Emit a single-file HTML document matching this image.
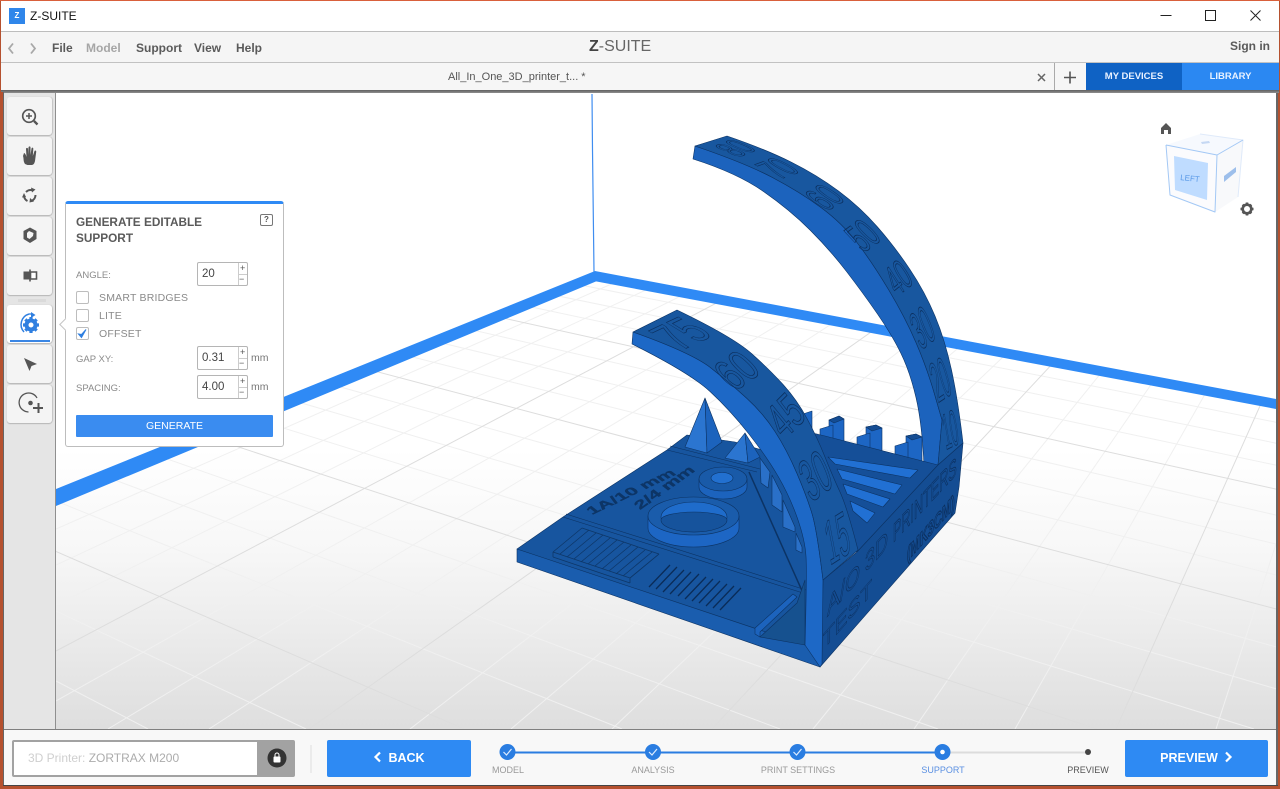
<!DOCTYPE html>
<html><head><meta charset="utf-8"><title>Z-SUITE</title>
<style>
html,body{margin:0;padding:0;width:1280px;height:789px;overflow:hidden;background:#b5512f;font-family:"Liberation Sans",sans-serif}
#r{position:absolute;left:0;top:0;width:1280px;height:789px;overflow:hidden}
.a{position:absolute;white-space:nowrap}
.m{font-size:12px;font-weight:bold;color:#5a5a5a;top:41px;line-height:14px}
.btn{position:absolute;left:7px;width:45px;height:38px;background:#f4f4f4;border:0;border-radius:3px;box-shadow:0 1px 1px #b5b5b5,1px 0 1px #c5c5c5}
.lab{font-size:9.5px;color:#8a8a8a;left:76px;line-height:12px}
.cb{position:absolute;left:76px;width:11px;height:11px;border:1px solid #bdbdbd;border-radius:2px;background:#fff}
.cl{font-size:10.5px;color:#8a8a8a;left:99px;line-height:12px;letter-spacing:.2px}
.inp{position:absolute;left:197px;width:49px;height:22px;border:1px solid #b5b5b5;border-radius:2px;background:#fff;font-size:11.5px;color:#444;line-height:23px;text-indent:4px}
.inp i{position:absolute;left:40px;top:0;width:9px;height:22px;border-left:1px solid #ccc;font:normal 9px/11px "Liberation Sans",sans-serif;text-indent:1px;color:#555}
.inp b{position:absolute;left:40px;top:11px;width:9px;height:1px;background:#ccc}
.mm{font-size:10.5px;color:#777;left:251px;line-height:12px}
.step{font-size:9px;color:#9a9a9a;top:764px;line-height:12px;transform:translateX(-50%);font-weight:normal}
.big{position:absolute;top:740px;height:37px;background:#2e8af3;border-radius:2px;color:#fff;font-size:12.5px;font-weight:bold;line-height:36px;text-align:center}
.n text{vector-effect:non-scaling-stroke}
</style></head><body><div id="r">

<div class="a" style="left:0;top:0;width:1280px;height:1px;background:#d9603b"></div>
<div class="a" style="left:1px;top:1px;width:1278px;height:30px;background:#fff"></div>
<div class="a" style="left:1px;top:31px;width:1278px;height:1px;background:#bdbdbd"></div>
<div class="a" style="left:1px;top:32px;width:1278px;height:30px;background:#f5f5f5"></div>
<div class="a" style="left:1px;top:62px;width:1278px;height:1px;background:#c2c2c2"></div>
<div class="a" style="left:1px;top:63px;width:1278px;height:27px;background:#f6f6f6"></div>
<div class="a" style="left:1px;top:90px;width:1278px;height:3px;background:linear-gradient(#5f5f5f,#8f8f8f)"></div>

<svg class="a" style="left:0;top:0" width="1280" height="789" viewBox="0 0 1280 789">
<defs>
<linearGradient id="fl" x1="0" y1="0" x2="0" y2="1"><stop offset="0" stop-color="#fff"/><stop offset=".56" stop-color="#fff"/><stop offset=".72" stop-color="#f7f7f7"/><stop offset="1" stop-color="#dedede"/></linearGradient>
<clipPath id="fc"><polygon points="594,272 56,498 56,729 1276,729 1276,405"/></clipPath>
</defs>
<rect x="56" y="93" width="1220" height="636" fill="url(#fl)"/>
<g clip-path="url(#fc)" stroke="#f0f0f0" stroke-width="1" fill="none">
<path d="M56 181.500L1280 423M56 193L1280 444M56 206L1280 466M56 234L1280 516M56 250L1280 545M56 267L1280 576M56 308L1280 648M56 331L1280 690M56 357.500L1254 729M56 420L938 729M56 458L780 729M56 501L622 729M56 611L306 729M56 681L148 729"/>
<path d="M802 200L56 529M839 200L56 565M875 200L56 605M949 200L56 701M985 200L108 729M1022 200L209 729M1095 200L410 729M1132 200L511 729M1168 200L612 729M1241 200L813 729M1276 203L914 729M1276 269L1015 729M1276 544L1216 729"/>
<g stroke="#dddddd">
<path d="M56 219L1280 490M56 287L1280 610M56 387L1097 729M56 551.500L464 729"/>
<path d="M912 200L56 651M1058 200L309 729M1205 200L712 729M1276 370L1116 729"/>
</g>
</g>
<polygon points="595,271 56,489 56,506 597,281" fill="#2f8af5"/>
<polygon points="595,271 1276,399 1276,409 594,281" fill="#2f8af5"/>
<path d="M592 94L592.500 150L594 272" stroke="#3f8df0" stroke-width="1.200" fill="none"/>

<!-- MODEL -->
<g stroke="#0c3364" stroke-width=".6" stroke-linejoin="round">
<!-- big arc side -->
<path fill="#1c63bd" d="M693 159Q737 173 763.500 191.500Q790 210 810 230Q830 250 846.500 271.500Q863 293 877.500 314Q892 335 901 353.500Q910 372 916 397.500Q922 423 924 465L938 465L942 420L934.500 394Q927 368 916 342.500Q905 317 888.500 289.500Q872 262 857 242.500Q842 223 821 207.500Q800 192 772.500 177.500Q745 163 695 146Z"/>
<!-- big arc top -->
<path fill="#18579f" d="M727 136Q765 149 791 162Q817 175 838.500 191Q860 207 877.500 227Q895 247 910 269.500Q925 292 935 316Q945 340 951.500 370Q958 400 963 443L938 465L942 420L934.500 394Q927 368 916 342.500Q905 317 888.500 289.500Q872 262 857 242.500Q842 223 821 207.500Q800 192 772.500 177.500Q745 163 695 146Z"/>
<!-- teeth -->
<g fill="#1d66c4">
<polygon points="803,414 812,411 812,432 803,432"/>
<polygon points="829,420 839,416 844,419 844,443 829,440"/><polygon fill="#144c92" points="829,420 839,416 844,419 834,423"/>
<polygon points="820,429 833,425 833,440 820,438"/>
<polygon points="866,427 876,425 882,428 882,452 866,449"/><polygon fill="#144c92" points="866,427 876,425 882,428 872,431"/>
<polygon points="857,437 870,433 870,450 857,447"/>
<polygon points="906,436 916,434 922,437 922,462 906,458"/><polygon fill="#144c92" points="906,436 916,434 922,437 912,440"/>
<polygon points="895,446 908,442 908,460 895,456"/>
</g>
<polygon fill="#154f98" points="800,430 825,436 938,465 857,552 820,540"/>
<g fill="#2170d3" stroke="#0c3364">
<polygon points="828,457 918,470 910,478 835,464"/>
<polygon points="837,469 902,485 895,494 842,479"/>
<polygon points="843,484 890,499 883,507 847,494"/>
<polygon points="850,501 875,513 867,523 853,511"/>
</g>
<!-- base -->
<polygon fill="#1a5dae" points="517,549 517,562 820,667 822,640 805,640"/>
<polygon fill="#17559f" points="517,549 563,517 667,450 687,435 735,442 830,470 822,600 805,645"/>
<path d="M563 517L803 593M566 514L806 590M667 450L757 472M670 446L760 469" stroke="#0c3364" fill="none"/>
<path d="M749 472L803 593" stroke="#0c3364" stroke-width="1.500" fill="none"/>
<polygon fill="#1c63bd" points="755,628 793,594 797,597 760,632 760,637 755,634"/>
<polygon fill="#16518f" points="760,637 797,603 805,580 805,645"/>
<!-- fins -->
<g fill="#2a70c8">
<polygon points="760,458 770,472 768,488 761,483"/>
<polygon points="772,475 782,495 782,512 772,505"/>
<polygon points="783,500 795,527 795,532 783,527"/>
<polygon points="796,533 802,547 802,553 796,550"/>
</g>
<!-- comb 1 -->
<g stroke="#0e3768" stroke-width=".8" fill="none">
<path d="M553 552L582 528M560 554L589 530M567 557L596 533M574 559L603 535M581 562L610 538M588 564L617 540M595 566L624 542M602 569L631 545M609 571L638 547M616 574L645 550M623 576L652 552M630 578L659 554"/>
<path d="M582 528L659 554M553 552L630 578M553 557L630 583M553 552V557M630 578V583M659 554L630 578"/>
</g>
<!-- comb 2 -->
<g stroke="#0a2c58" stroke-width="1.300" fill="none">
<path d="M649 587L670 565M656 589L677 567M663 592L684 570M670 594L691 572M678 596L699 574M685 599L706 577M692 601L713 579M699 603L720 581M706 606L727 584M713 608L734 586M720 610L741 588"/>
</g>
<!-- cones -->
<polygon fill="#2b75d0" points="705,398 685,447 707,453"/>
<polygon fill="#1c63bd" points="705,398 707,453 722,442"/>
<polygon fill="#2b75d0" points="745,433 725,458 748,463"/>
<polygon fill="#1c63bd" points="745,433 748,463 760,457"/>
<!-- small ring -->
<path d="M699 479V487A24 12 0 0 0 747 487V479Z" fill="#1c63bd"/>
<ellipse cx="723" cy="479" rx="24" ry="12" fill="#195aa8"/>
<ellipse cx="722" cy="478" rx="11" ry="5.500" fill="#2270d0"/>
<!-- big ring -->
<path d="M648 516V528A45.500 19 0 0 0 739 528V516Z" fill="#1d66c4"/>
<ellipse cx="693.500" cy="516" rx="45.500" ry="19" fill="#1a5cab"/>
<ellipse cx="694" cy="517" rx="33" ry="15" fill="#1f6ccb"/>
<path d="M661 520A33 8 0 0 1 727 520A33 12 0 0 1 661 520Z" fill="#16539c"/>
<!-- wall face -->
<polygon fill="#144d93" points="820,667 955,513 959,487 963,443 938,465 857,552 823,580"/>
<!-- small arc side -->
<path fill="#1d68c6" d="M632 344Q690 373 710 391.500Q730 410 748.500 433.500Q767 457 778.500 477Q790 497 797.500 518.500Q805 540 806 556.500Q807 573 805 645L820 667L822 664L823 580Q817 530 812 513.500Q807 497 797 473.500Q787 450 775 431.500Q763 413 746.500 398Q730 383 711 368Q692 353 633 332Z"/>
<!-- small arc top -->
<path fill="#18579f" d="M677 310Q733 337 751.500 353.500Q770 370 783.500 385Q797 400 807 418.500Q817 437 825 457Q833 477 840 492Q847 507 858 550L823 580Q817 530 812 513.500Q807 497 797 473.500Q787 450 775 431.500Q763 413 746.500 398Q730 383 711 368Q692 353 633 332Z"/>
</g>

<!-- text on model -->
<g class="n" fill="none" stroke="#0b2f5e" stroke-width=".7" font-family="'Liberation Sans',sans-serif" font-size="20">
<text transform="matrix(.9,-.36,1.82,.77,738,157.500)">80</text>
<text transform="matrix(.99,-.36,1.89,1.05,779.500,179.500)">70</text>
<text transform="matrix(.9,-.54,1.75,1.19,826.500,211.500)">60</text>
<text transform="matrix(.86,-.63,1.54,1.54,863.500,253)">50</text>
<text transform="matrix(.77,-.63,1.12,1.75,897.500,296.500)">40</text>
<text transform="matrix(.72,-.59,.98,2.38,921,350.500)">30</text>
<text transform="matrix(.68,-.45,.77,2.66,938,403)">20</text>
<text transform="matrix(.63,-.32,.42,2.45,946,450)">10</text>
<text transform="matrix(1.53,-.72,2.45,1.4,680.500,351)">75</text>
<text transform="matrix(1.26,-.9,1.75,1.68,734.500,392)">60</text>
<text transform="matrix(1.04,-1.04,1.54,1.89,784.500,440)">45</text>
<text transform="matrix(1.08,-.81,1.12,2.66,811,503)">30</text>
<text transform="matrix(.99,-.63,.56,3,830,565.500)">15</text>
<text transform="matrix(.96,-1.1,0,1.12,823,650)">TEST</text>
<text transform="matrix(.96,-1.1,0,1.3,827,617)">A/O</text>
<text transform="matrix(.9,-1.02,0,1.3,865,573)">3D</text>
<text transform="matrix(.63,-.68,0,1.3,893,543)">PRINTERS</text>
<text transform="matrix(.55,-.63,0,1,907,562)" font-weight="bold" stroke-width="1">(MK3CM)</text>
</g>
<g fill="#0d3566" stroke="#0d3566" stroke-width=".3" font-family="'Liberation Sans',sans-serif" font-size="12" font-weight="bold">
<text transform="matrix(1.5,-.72,.9,.7,592,515)">1A/10 mm</text>
<text transform="matrix(1.35,-.95,.9,.7,640,510)">2/4 mm</text>
</g>

<!-- cube -->
<g stroke-linejoin="round">
<polygon points="1166,145 1200,134 1243,140 1217,155" fill="#f6f9fe"/>
<polygon points="1217,155 1243,140 1238,197 1215,212" fill="#f8f9fb"/>
<polygon points="1166,145 1217,155 1215,212 1170,195" fill="#fbfbfd"/>
<polygon points="1174,156 1208,163 1207,200 1175,190" fill="#bfdcff"/>
<path d="M1200 134L1243 140L1238 197" stroke="#dfeafa" fill="none"/>
<path d="M1166 145L1217 155L1243 140M1217 155L1215 212L1170 195L1166 145" stroke="#a3c8f5" stroke-width="1" fill="none"/>
<polygon points="1224,176 1236,167 1236,172 1224,182" fill="#9dbfeb"/>
<polygon points="1201,142 1209,141 1210,143 1202,144" fill="#c5d8f3"/>
<text x="1190" y="181" font-size="8" fill="#5a9ae8" text-anchor="middle" font-family="'Liberation Sans',sans-serif" transform="rotate(6 1190 178)">LEFT</text>
</g>
<path d="M1166 123L1171 128V134H1168V130H1164V134H1161V128Z" fill="#555"/>
<g transform="translate(1247,209)" fill="#555">
<circle r="4.300" fill="none" stroke="#555" stroke-width="2.600"/>
<path d="M-1.300-6.500H1.300V-4H-1.300ZM-1.300 4H1.300V6.500H-1.300ZM-6.500-1.300H-4V1.300H-6.500ZM4-1.300H6.500V1.300H4Z"/>
<path d="M-1.200-6.200H1.200V-4H-1.200Z" transform="rotate(45)"/><path d="M-1.200-6.200H1.200V-4H-1.200Z" transform="rotate(135)"/><path d="M-1.200-6.200H1.200V-4H-1.200Z" transform="rotate(225)"/><path d="M-1.200-6.200H1.200V-4H-1.200Z" transform="rotate(315)"/>
</g>
</svg>

<!-- window edge & toolbar -->
<div class="a" style="left:0;top:92px;width:3px;height:697px;background:#b5512f"></div>
<div class="a" style="left:3px;top:92px;width:1px;height:694px;background:#666"></div>
<div class="a" style="left:4px;top:93px;width:51px;height:636px;background:#e5e5e5"></div>
<div class="a" style="left:55px;top:93px;width:1px;height:636px;background:#8f8f8f"></div>
<div class="a" style="left:1276px;top:93px;width:2px;height:693px;background:#666"></div>
<div class="a" style="left:1278px;top:93px;width:2px;height:696px;background:#b5512f"></div>
<div class="a" style="left:0;top:786px;width:1280px;height:3px;background:#b5512f"></div>

<div class="btn" style="top:97px"></div>
<div class="btn" style="top:137px"></div>
<div class="btn" style="top:177px"></div>
<div class="btn" style="top:217px"></div>
<div class="btn" style="top:257px"></div>
<div class="a" style="left:18px;top:299px;width:28px;height:3px;background:#dadada"></div>
<div class="btn" style="top:305px;background:#fff"></div>
<div class="a" style="left:10px;top:340px;width:40px;height:2px;background:#3a86e4"></div>
<div class="btn" style="top:345px"></div>
<div class="btn" style="top:385px"></div>

<svg class="a" style="left:0;top:90px" width="60" height="345" viewBox="0 90 60 345">
<g fill="none" stroke="#555" stroke-width="1.700"><circle cx="29" cy="116" r="6.300"/><path d="M34 121L37.500 124.500" stroke-width="2.300"/><path d="M26 116H32M29 113V119" stroke-width="1.500"/></g>
<path d="M25 164C23 161 24 159 23 156L24 153C25 153 26 155 26.500 157L26 149C26 147.500 28 147.500 28 149V155L28.500 147.500C28.800 146 30.500 146 30.500 147.500V155L31.500 148.500C32 147 33.500 147.500 33.300 149L32.800 156L34.500 151C35 150 36.500 150.500 36.200 152L35 161C34.500 163 34 164.500 32 165H27.500Z" fill="#555"/>
<g fill="none" stroke="#555" stroke-width="2"><path d="M26 192A6.500 6.500 0 0 1 33 190.500"/><path d="M35.500 195A6.500 6.500 0 0 1 31.500 201"/><path d="M27.500 201A6.500 6.500 0 0 1 24 196"/></g>
<path d="M31 187.500L35.500 189.500L32 192.500ZM34 201.500L29.500 202.500L30 198ZM22 197.500L26 197L24 193Z" fill="#555"/>
<path d="M30 227.500L36.500 231V239L30 243L23.500 239V231Z" fill="#555"/><path d="M29 231L33.500 233L33 236L29.500 239L27 237.500V233Z" fill="#f4f4f4"/>
<path d="M23.500 271.500H30V279.500H23.500Z" fill="#555"/><path d="M30 269.500V281.500" stroke="#555" stroke-width="1.600"/><path d="M30.500 272H36.500V279H30.500Z" fill="#fff" stroke="#555" stroke-width="1.600"/>
<g transform="translate(31,325)" fill="#2f7fe0"><circle r="4.500" fill="none" stroke="#2f7fe0" stroke-width="4"/><path d="M-1.600-8H1.600V-5H-1.600ZM-1.600 5H1.600V8H-1.600ZM-8-1.600H-5V1.600H-8ZM5-1.600H8V1.600H5Z"/><path d="M-1.600-8H1.600V-5H-1.600Z" transform="rotate(45)"/><path d="M-1.600-8H1.600V-5H-1.600Z" transform="rotate(135)"/><path d="M-1.600-8H1.600V-5H-1.600Z" transform="rotate(225)"/><path d="M-1.600-8H1.600V-5H-1.600Z" transform="rotate(315)"/></g>
<path d="M24 332A11 11 0 0 1 29 314" fill="none" stroke="#2f7fe0" stroke-width="1.500"/><path d="M31 312L35.500 315 31 318Z" fill="#2f7fe0"/><path d="M29 314H32" stroke="#2f7fe0" stroke-width="1.300"/>
<path d="M24 358L37 364L31.500 366L29.500 371Z" fill="#555"/>
<path d="M37 398A9.500 9.500 0 1 0 28.500 412" fill="none" stroke="#555" stroke-width="1.300"/><circle cx="30.500" cy="403" r="2.300" fill="#555"/><path d="M33 408H43M38.500 403V413" stroke="#555" stroke-width="2"/>
</svg>

<!-- panel -->
<div class="a" style="left:65px;top:201px;width:217px;height:242px;background:#fff;border:1px solid #bdbdbd;border-top:3px solid #2f8af5;border-radius:3px"></div>
<div class="a" style="left:61px;top:320px;width:8px;height:8px;background:#fff;border-left:1px solid #c5c5c5;border-bottom:1px solid #c5c5c5;transform:rotate(45deg)"></div>
<div class="a" style="left:76px;top:214px;font-size:11.800px;font-weight:bold;color:#5a5a5a;line-height:16px">GENERATE EDITABLE<br>SUPPORT</div>
<div class="a" style="left:260px;top:214px;width:11px;height:10px;border:1px solid #777;border-radius:2px;font-size:8px;font-weight:bold;color:#555;line-height:10px;text-align:center">?</div>
<div class="a lab" style="top:270px">ANGLE:</div>
<div class="inp" style="top:262px">20<i>+<br>&#8722;</i><b></b></div>
<div class="cb" style="top:291px"></div><div class="a cl" style="top:292px">SMART BRIDGES</div>
<div class="cb" style="top:309px"></div><div class="a cl" style="top:310px">LITE</div>
<div class="cb" style="top:327px"></div><div class="a cl" style="top:328px">OFFSET</div>
<svg class="a" style="left:76px;top:327px" width="13" height="13"><path d="M2.500 7L5.500 10.500L10 2.500L5.500 7.500Z" fill="#2f7fe0" stroke="#2f7fe0"/></svg>
<div class="a lab" style="top:354px">GAP XY:</div>
<div class="inp" style="top:346px">0.31<i>+<br>&#8722;</i><b></b></div><div class="a mm" style="top:352px">mm</div>
<div class="a lab" style="top:383px">SPACING:</div>
<div class="inp" style="top:375px">4.00<i>+<br>&#8722;</i><b></b></div><div class="a mm" style="top:381px">mm</div>
<div class="a" style="left:76px;top:415px;width:197px;height:22px;background:#3a8cf0;border-radius:1px;color:#fff;font-size:10.500px;line-height:22px;text-align:center">GENERATE</div>

<!-- titlebar -->
<div class="a" style="left:9px;top:8px;width:16px;height:16px;background:#2f86ea;color:#fff;font-size:8px;font-weight:bold;line-height:16px;text-align:center">Z</div>
<div class="a" style="left:30px;top:9px;font-size:12px;color:#111;line-height:14px">Z-SUITE</div>
<svg class="a" style="left:1150px;top:5px" width="120" height="22"><path d="M10.500 10.500H21.500" stroke="#222" stroke-width="1"/><rect x="55.500" y="5.500" width="10" height="10" fill="none" stroke="#222"/><path d="M100.500 5.500L110.500 15.500M110.500 5.500L100.500 15.500" stroke="#222" fill="none"/></svg>

<!-- menu -->
<svg class="a" style="left:6px;top:41px" width="36" height="15"><path d="M7 2.500L3 7.500L7 12.500M25 2.500L29 7.500L25 12.500" fill="none" stroke="#a8a8a8" stroke-width="1.800"/></svg>
<div class="a m" style="left:52px">File</div>
<div class="a m" style="left:86px;color:#a6a6a6">Model</div>
<div class="a m" style="left:136px">Support</div>
<div class="a m" style="left:194px">View</div>
<div class="a m" style="left:236px">Help</div>
<div class="a" style="left:589px;top:38px;font-size:16px;line-height:18px;color:#666"><b style="color:#444">Z</b>-SUITE</div>
<div class="a m" style="left:1230px;top:39px">Sign in</div>

<!-- tab bar -->
<div class="a" style="left:448px;top:71px;font-size:11px;color:#555;line-height:13px">All_In_One_3D_printer_t... *</div>
<svg class="a" style="left:1034px;top:70px" width="50" height="16"><path d="M4 4L11 11M11 4L4 11" stroke="#666" stroke-width="1.500"/><path d="M30 7.500H42M36 1.500V13.500" stroke="#555" stroke-width="1.600"/></svg>
<div class="a" style="left:1054px;top:63px;width:1px;height:27px;background:#aaa"></div>
<div class="a" style="left:1086px;top:63px;width:96px;height:27px;background:#0f62c4;color:#e8f1ff;font-size:9.500px;font-weight:bold;line-height:28px;text-align:center">MY DEVICES</div>
<div class="a" style="left:1182px;top:63px;width:97px;height:27px;background:#2b88f2;color:#e8f1ff;font-size:9.500px;font-weight:bold;line-height:28px;text-align:center">LIBRARY</div>

<!-- bottom bar -->
<div class="a" style="left:4px;top:729px;width:1272px;height:1px;background:#7f7f7f"></div>
<div class="a" style="left:4px;top:730px;width:1272px;height:55px;background:#f8f8f8"></div>
<div class="a" style="left:3px;top:785px;width:1275px;height:1px;background:#444"></div>
<div class="a" style="left:12px;top:740px;width:283px;height:37px;background:#a2a2a2;border-radius:2px"></div>
<div class="a" style="left:14px;top:742px;width:243px;height:33px;background:#fff"></div>
<div class="a" style="left:28px;top:751px;font-size:12px;line-height:14px;color:#cfcfcf">3D Printer: <span style="color:#acacac">ZORTRAX M200</span></div>
<svg class="a" style="left:266px;top:747px" width="22" height="22"><circle cx="11" cy="11" r="9.500" fill="#333"/><rect x="7.500" y="9.500" width="7" height="6" rx="1" fill="#fff"/><path d="M9 9.500V8A2 2 0 0 1 13 8V9.500" fill="none" stroke="#fff" stroke-width="1"/></svg>
<div class="a" style="left:310px;top:745px;width:2px;height:28px;background:#ebebeb"></div>
<div class="big" style="left:327px;width:144px"><svg width="9" height="12" style="vertical-align:-1px;margin-right:6px"><path d="M7 1.500L2.500 6L7 10.500" fill="none" stroke="#fff" stroke-width="2.200"/></svg>BACK</div>
<div class="big" style="left:1125px;width:143px">PREVIEW<svg width="9" height="12" style="vertical-align:-1px;margin-left:6px"><path d="M2 1.500L6.500 6L2 10.500" fill="none" stroke="#fff" stroke-width="2.200"/></svg></div>
<svg class="a" style="left:490px;top:740px" width="620" height="24">
<path d="M17 12.500H452" stroke="#2a7de1" stroke-width="2"/>
<path d="M452 12.500H598" stroke="#dcdcdc" stroke-width="2"/>
<g fill="#2a7de1"><circle cx="17.500" cy="12" r="8"/><circle cx="163" cy="12" r="8"/><circle cx="307.500" cy="12" r="8"/><circle cx="452.500" cy="12" r="8"/></g>
<g fill="none" stroke="#dcebff" stroke-width="1.200"><path d="M13.500 12L16.500 15L21.500 9"/><path d="M159 12L162 15L167 9"/><path d="M303.500 12L306.500 15L311.500 9"/></g>
<circle cx="452.500" cy="12" r="2.300" fill="#fff"/>
<circle cx="598" cy="12" r="3" fill="#444"/>
</svg>
<div class="a step" style="left:508px">MODEL</div>
<div class="a step" style="left:653px">ANALYSIS</div>
<div class="a step" style="left:798px">PRINT SETTINGS</div>
<div class="a step" style="left:943px;color:#5b90e2">SUPPORT</div>
<div class="a step" style="left:1088px;color:#555">PREVIEW</div>

</div></body></html>
